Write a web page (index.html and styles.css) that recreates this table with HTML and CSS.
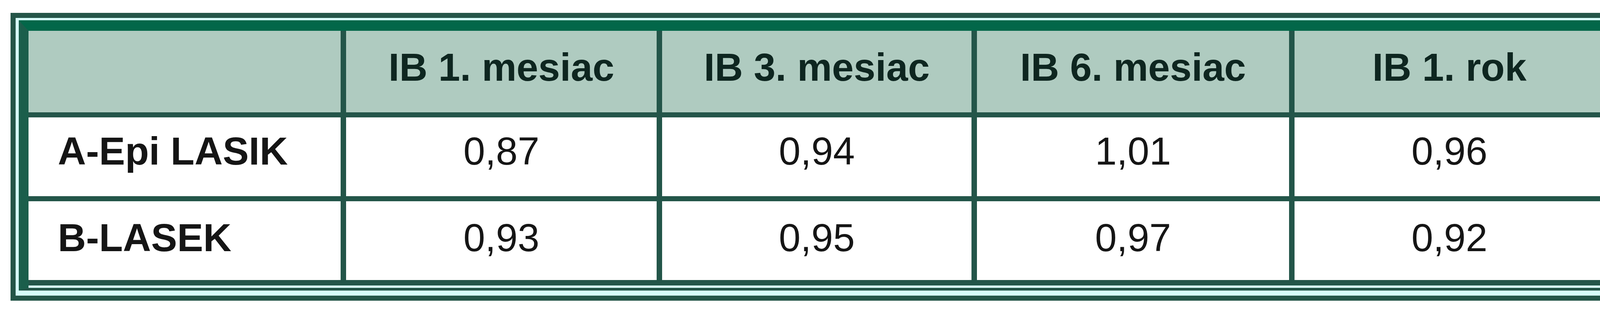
FILE: index.html
```html
<!DOCTYPE html>
<html lang="sk">
<head>
<meta charset="utf-8">
<title>IB tabuľka</title>
<link rel="stylesheet" href="styles.css">
</head>
<body>
<div class="frame">
  <div class="inner">
    <div class="grid">
      <div class="cell head"></div>
      <div class="cell head center">IB 1. mesiac</div>
      <div class="cell head center">IB 3. mesiac</div>
      <div class="cell head center">IB 6. mesiac</div>
      <div class="cell head center">IB 1. rok</div>

      <div class="cell row1 label">A-Epi LASIK</div>
      <div class="cell row1 center">0,87</div>
      <div class="cell row1 center">0,94</div>
      <div class="cell row1 center">1,01</div>
      <div class="cell row1 center">0,96</div>

      <div class="cell row2 label">B-LASEK</div>
      <div class="cell row2 center">0,93</div>
      <div class="cell row2 center">0,95</div>
      <div class="cell row2 center">0,97</div>
      <div class="cell row2 center">0,92</div>
    </div>
  </div>
</div>
</body>
</html>
```

FILE: styles.css
```css
html, body {
  margin: 0;
  padding: 0;
  background: #ffffff;
}

body {
  font-family: "Liberation Sans", Arial, sans-serif;
}

.frame {
  margin: 33px 0 0 27px;
  width: 4085px;
  border: 13px solid #245548;
  background: #d6fdfa;
  padding: 6px 15px 13px 8px;
}

.inner {
  border-top: 27px solid #026749;
  border-left: 25px solid #1b5e4b;
  border-right: 10px solid #245548;
  border-bottom: 7px solid #245548;
  background: #d6fdfa;
  padding: 0 6px 6px 0;
}

.grid {
  display: grid;
  grid-template-columns: 799px 795px 792px 799px 793px;
  grid-template-rows: 209px 202px 202px;
  column-gap: 14px;
  row-gap: 13px;
  background: #235549;
  padding: 0 10px 14px 0;
}

.cell {
  display: flex;
  align-items: flex-start;
  font-size: 100px;
  line-height: 1.15;
  color: #151515;
  background: #ffffff;
  white-space: nowrap;
}

.head {
  background: #afcbc0;
  font-weight: bold;
  color: #0e2620;
  padding-top: 36px;
}

.row1 {
  padding-top: 29px;
}

.row2 {
  padding-top: 36px;
}

.center {
  justify-content: center;
}

.label {
  font-weight: bold;
  padding-left: 75px;
}
```
